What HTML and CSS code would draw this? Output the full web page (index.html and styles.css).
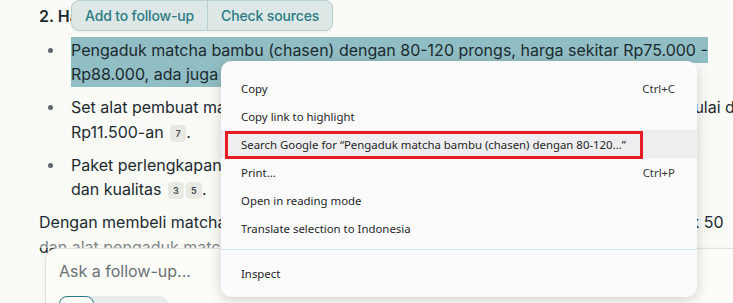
FILE: index.html
```html
<!DOCTYPE html>
<html lang="id">
<head>
    <meta charset="UTF-8">
    <meta name="viewport" content="width=device-width, initial-scale=1.0">
    <title>Jawaban</title>
    <link rel="stylesheet" href="styles.css">
</head>
<body>
    <main class="answer">
        <h3 class="section-title">2. Harga Peralatan Pendukung</h3>
        <ul class="items">
            <li><span class="sel">Pengaduk matcha bambu (chasen) dengan 80-120 prongs, harga sekitar Rp75.000 - Rp88.000, ada juga pilihan lain yang lebih murah</span></li>
            <li>Set alat pembuat matcha lengkap dengan chasen dan mangkuk kini sudah dijual mulai dari <span class="nowrap">Rp11.500-an</span> <span class="cite">7</span>.</li>
            <li>Paket perlengkapan matcha tersedia dalam berbagai pilihan harga sesuai merek <span class="nowrap">dan kualitas <span class="cite">3</span><span class="cite">5</span>.</span></li>
        </ul>
        <p class="summary">Dengan membeli matcha bubuk dalam kemasan besar, Anda bisa berhemat biaya untuk 50 dan alat pengaduk matcha yang awet dipakai berulang kali untuk membuat matcha</p>
    </main>

    <!-- selection toolbar -->
    <div class="sel-bar">
        <button class="sel-btn">Add to follow-up</button>
        <button class="sel-btn">Check sources</button>
    </div>

    <!-- follow-up box -->
    <div class="fade"></div>
    <div class="ask">
        <div class="ask-placeholder">Ask a follow-up...</div>
        <div class="mode-toggle">
            <span class="mode active"></span>
            <span class="mode"></span>
        </div>
    </div>

    <!-- context menu -->
    <div class="menu">
        <div class="menu-item"><span>Copy</span><span class="key">Ctrl+C</span></div>
        <div class="menu-item"><span>Copy link to highlight</span></div>
        <div class="menu-item hover"><span>Search Google for “Pengaduk matcha bambu (chasen) dengan 80-120...”</span><span class="mark"></span></div>
        <div class="menu-item"><span>Print...</span><span class="key">Ctrl+P</span></div>
        <div class="menu-item"><span>Open in reading mode</span></div>
        <div class="menu-item"><span>Translate selection to Indonesia</span></div>
        <div class="menu-sep"></div>
        <div class="menu-item"><span>Inspect</span></div>
    </div>
</body>
</html>
```

FILE: styles.css
```css
body {
    margin: 0;
    height: 303px;
    overflow: hidden;
    background: #fafaf7;
    font-family: Inter, "Liberation Sans", sans-serif;
    color: #1c2b30;
}

.answer {
    width: 716px;
    padding: 4px 0 0 39px;
    font-size: 16px;
    line-height: 24.5px;
}

.section-title {
    margin: 0 0 9px;
    font-size: 16px;
    font-weight: 600;
}

.items {
    list-style: none;
    margin: 0;
    padding: 0 0 0 32px;
}

.items li {
    position: relative;
    margin-bottom: 8.5px;
}

.items li::before {
    content: "";
    position: absolute;
    left: -23px;
    top: 10px;
    width: 5px;
    height: 5px;
    border-radius: 50%;
    background: #5d666a;
}

.sel {
    background: #91bec4;
    padding: 3px 0;
}

.nowrap {
    white-space: nowrap;
}

.cite {
    display: inline-block;
    width: 16px;
    height: 17px;
    margin-left: 2px;
    border-radius: 4px;
    background: #e9e9e4;
    color: #40484b;
    font-size: 9px;
    font-weight: 600;
    line-height: 17px;
    text-align: center;
    vertical-align: 1px;
}

.summary {
    margin: 0;
}

.sel-bar {
    position: absolute;
    left: 71px;
    top: 0;
    display: flex;
    height: 31px;
    border: 1px solid #b9d0d0;
    border-radius: 8px;
    background: #dde8e6;
    box-sizing: border-box;
    overflow: hidden;
    box-shadow: 0 1px 3px rgba(0, 0, 0, 0.06);
}

.sel-btn {
    border: none;
    background: none;
    padding: 0 13px;
    font-family: Inter, "Liberation Sans", sans-serif;
    font-size: 14px;
    font-weight: 500;
    letter-spacing: -0.15px;
    color: #2b7a84;
}

.sel-btn + .sel-btn {
    border-left: 1px solid #b9d0d0;
}

.fade {
    position: absolute;
    left: 0;
    right: 0;
    top: 234px;
    height: 14px;
    background: linear-gradient(rgba(250, 250, 247, 0.2), rgba(250, 250, 247, 0.5));
}

.ask {
    position: absolute;
    left: 45px;
    top: 248px;
    width: 700px;
    height: 80px;
    border: 1px solid #e3e3de;
    border-radius: 12px;
    background: #fcfcf9;
    box-shadow: 0 2px 8px rgba(0, 0, 0, 0.05);
    box-sizing: border-box;
    padding: 10px 13px;
}

.ask-placeholder {
    font-size: 16px;
    line-height: 25px;
    color: #6a7174;
}

.mode-toggle {
    display: flex;
    width: 109px;
    margin-top: 12px;
    border-radius: 8px;
    background: #e6eceb;
}

.mode {
    width: 35px;
    height: 30px;
}

.mode.active {
    border: 1px solid #2b7a84;
    border-radius: 8px;
    background: #fcfcf9;
    box-sizing: border-box;
}

.menu {
    position: absolute;
    left: 221px;
    top: 61px;
    width: 476px;
    padding: 13px 0 10px;
    border-radius: 10px;
    background: #fbfbfd;
    box-shadow: 0 3px 14px rgba(0, 0, 0, 0.18);
    font-family: "Noto Sans", sans-serif;
    font-size: 11.4px;
    color: #1f1f1f;
}

.menu-item {
    position: relative;
    display: flex;
    justify-content: space-between;
    align-items: center;
    height: 28px;
    padding: 0 22px 0 20px;
}

.menu-item.hover {
    background: #eeeef0;
}

.key {
    color: #333;
}

.mark {
    position: absolute;
    left: 4px;
    top: 1px;
    width: 418px;
    height: 28px;
    border: 3px solid #e81c24;
    box-sizing: border-box;
}

.menu-sep {
    height: 1px;
    margin: 7px 0 9px;
    background: #d3e3f1;
}
```
